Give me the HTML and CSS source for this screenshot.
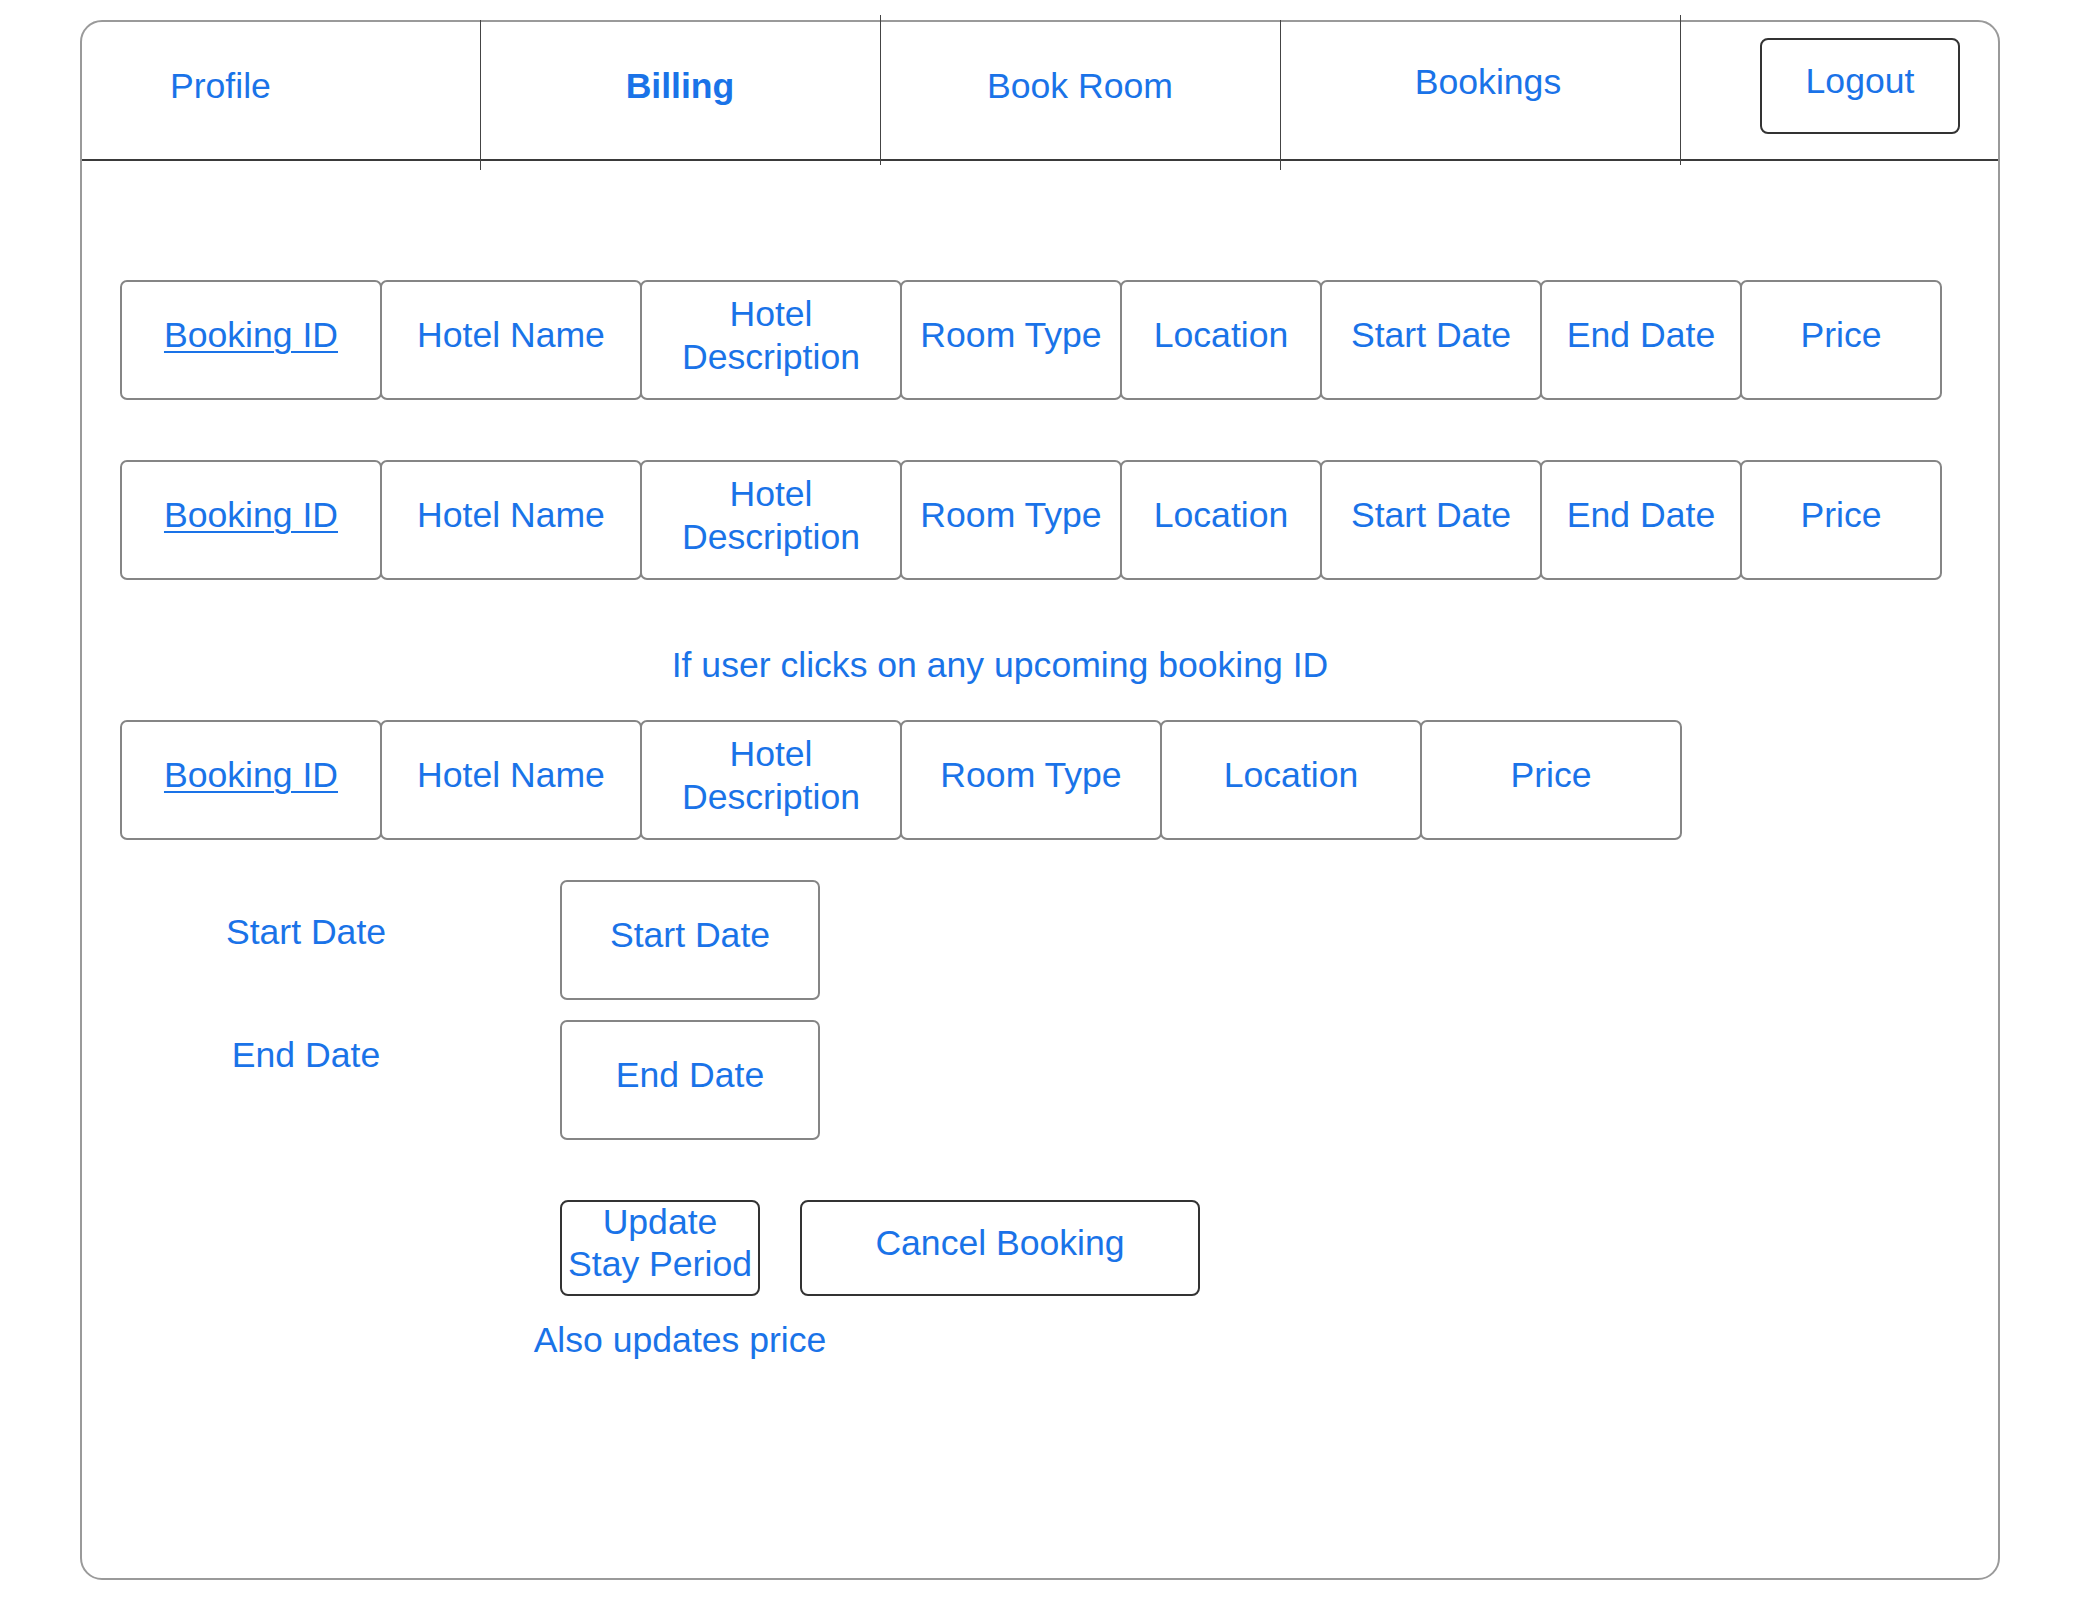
FILE: index.html
```html
<!DOCTYPE html>
<html lang="en">
<head>
<meta charset="utf-8">
<title>Billing</title>
<link rel="stylesheet" href="styles.css">
</head>
<body>
<div class="frame">
  <nav class="nav">
    <div class="tab tab-profile div-low">Profile</div>
    <div class="tab tab-center tab-bold div-high">Billing</div>
    <div class="tab tab-center div-low">Book Room</div>
    <div class="tab tab-center tab-bookings div-high">Bookings</div>
    <div class="tab tab-logout"><div class="btn btn-logout">Logout</div></div>
  </nav>

  <main class="content">
    <div class="row row-first">
      <div class="cell w260"><a class="link">Booking ID</a></div>
      <div class="cell w260">Hotel Name</div>
      <div class="cell w260">Hotel<br>Description</div>
      <div class="cell w220">Room Type</div>
      <div class="cell w200">Location</div>
      <div class="cell w220">Start Date</div>
      <div class="cell w200">End Date</div>
      <div class="cell w200">Price</div>
    </div>
    <div class="row row-second">
      <div class="cell w260"><a class="link">Booking ID</a></div>
      <div class="cell w260">Hotel Name</div>
      <div class="cell w260">Hotel<br>Description</div>
      <div class="cell w220">Room Type</div>
      <div class="cell w200">Location</div>
      <div class="cell w220">Start Date</div>
      <div class="cell w200">End Date</div>
      <div class="cell w200">Price</div>
    </div>

    <p class="caption">If user clicks on any upcoming booking ID</p>

    <div class="row row-third">
      <div class="cell w260"><a class="link">Booking ID</a></div>
      <div class="cell w260">Hotel Name</div>
      <div class="cell w260">Hotel<br>Description</div>
      <div class="cell w260">Room Type</div>
      <div class="cell w260">Location</div>
      <div class="cell w260">Price</div>
    </div>

    <div class="form">
      <div class="form-row">
        <div class="label label-start">Start Date</div>
        <div class="field">Start Date</div>
      </div>
      <div class="form-row form-row-gap">
        <div class="label label-end">End Date</div>
        <div class="field">End Date</div>
      </div>
    </div>

    <div class="actions">
      <div class="btn btn-update">Update<br>Stay Period</div>
      <div class="btn btn-cancel">Cancel Booking</div>
    </div>
    <p class="note">Also updates price</p>
  </main>
</div>
</body>
</html>
```

FILE: styles.css
```css
* { box-sizing: border-box; }

html, body {
  margin: 0;
  padding: 0;
  background: #ffffff;
}

body {
  font-family: "Liberation Sans", Arial, sans-serif;
  font-size: 35.6px;
  color: #1a73e8;
}

.frame {
  margin: 20px 0 0 80px;
  width: 1920px;
  height: 1560px;
  border: 2px solid #9a9a9a;
  border-radius: 22px;
}

/* ---------- nav ---------- */
.nav {
  display: flex;
  height: 139px;
  border-bottom: 2px solid #3a3a3a;
}

.tab {
  position: relative;
  display: flex;
  align-items: center;
  width: 400px;
  line-height: 43px;
  padding-bottom: 9px;
}

.tab::after {
  content: "";
  position: absolute;
  right: -1px;
  width: 1px;
  background: #444;
}

.div-low::after { top: -2px; bottom: -11px; }
.div-high::after { top: -7px; bottom: -6px; }

.tab-profile {
  width: 398px;
  padding-left: 88px;
}

.tab-center { justify-content: center; }

.tab-bold { font-weight: bold; }

.tab-bookings {
  padding-left: 16px;
  padding-bottom: 16px;
}

.tab-logout {
  width: 318px;
  align-items: flex-start;
  padding: 16px 0 0 80px;
}

.btn {
  display: flex;
  align-items: center;
  justify-content: center;
  text-align: center;
  height: 96px;
  border: 2px solid #333;
  border-radius: 8px;
  line-height: 42px;
  padding-bottom: 10px;
}

.btn-logout { width: 200px; }

/* ---------- content ---------- */
.content {
  padding-left: 38px;
}

.row {
  display: flex;
}

.row-first { margin-top: 119px; }
.row-second { margin-top: 60px; }
.row-third { margin-top: 33px; }

.cell {
  display: flex;
  align-items: center;
  justify-content: center;
  text-align: center;
  height: 120px;
  margin-right: -2px;
  border: 2px solid #858585;
  border-radius: 7px;
  line-height: 43px;
  padding-bottom: 9px;
  background: #fff;
}

.w260 { width: 262px; }
.w220 { width: 222px; }
.w200 { width: 202px; }

.link {
  text-decoration: underline;
  text-decoration-thickness: 2px;
  text-underline-offset: 4px;
}

.caption {
  margin: 64px 0 0 0;
  width: 1760px;
  text-align: center;
  line-height: 43px;
}

/* ---------- form ---------- */
.form {
  margin-top: 40px;
}

.form-row {
  display: flex;
  align-items: flex-start;
}

.form-row-gap { margin-top: 20px; }

.label {
  width: 372px;
  margin-right: 68px;
  text-align: center;
  line-height: 43px;
}

.label-start { padding-top: 31px; }
.label-end { padding-top: 14px; }

.field {
  display: flex;
  align-items: center;
  justify-content: center;
  width: 260px;
  height: 120px;
  border: 2px solid #858585;
  border-radius: 7px;
  line-height: 43px;
  padding-bottom: 10px;
}

/* ---------- actions ---------- */
.actions {
  display: flex;
  gap: 40px;
  margin: 60px 0 0 440px;
}

.btn-update { width: 200px; }
.btn-cancel { width: 400px; }

.note {
  margin: 23px 0 0 360px;
  width: 400px;
  text-align: center;
  line-height: 43px;
}
```
